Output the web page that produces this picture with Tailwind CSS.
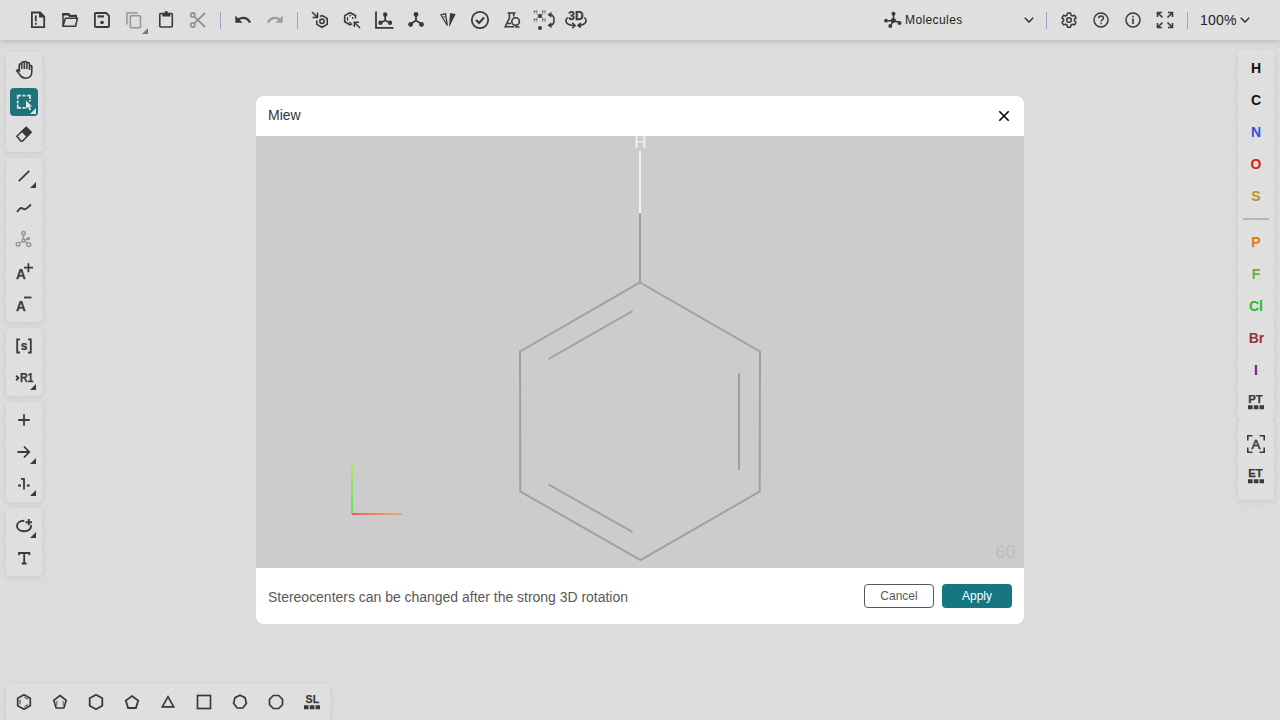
<!DOCTYPE html>
<html lang="en">
<head>
<meta charset="utf-8">
<title>Ketcher</title>
<script src="https://cdn.jsdelivr.net/npm/@tailwindcss/browser@4"></script>
<style>
svg.i{width:24px;height:24px;fill:none;stroke:#3a3a3a;stroke-width:1.8;overflow:visible;flex:none}
svg.i .f{fill:#3a3a3a;stroke:none}
svg.i text{fill:#3a3a3a;stroke:#3a3a3a;stroke-width:.25;font-family:"Liberation Sans",sans-serif;font-weight:700}
svg.i text.n{stroke:none;font-weight:400;font-size:5.5px}
.m::after{content:"";position:absolute;right:6px;bottom:4px;border-left:6px solid transparent;border-bottom:6px solid #3d3d3d}
</style>
</head>
<body class="w-[1280px] h-[720px] overflow-hidden bg-[#dddddd] relative flex flex-col font-['Liberation_Sans',sans-serif]">
<header class="h-10 flex-none flex items-center bg-[#e0e0e0] shadow-[0_2px_5px_rgba(90,100,110,0.25)] pl-[22px] pr-[30px] text-[#222]">
  <div class="flex items-center *:flex *:justify-center">
    <div class="w-8"><svg class="i" viewBox="0 0 24 24"><path d="M5.900 4.500h8.300l4 4.200v10.400H5.900z"/><path class="f" d="M13 4l5.800 5.500H13z"/><path d="M9.800 7.500v5.700M9.800 14.700v2" /></svg></div>
    <div class="w-8"><svg class="i" viewBox="0 0 24 24"><path d="M5 18.200V5.800h5l1.500 2h6.700v2.400M5 18.200l2.400-8h12l-1.800 8z" stroke-width="1.500"/><path d="M4.500 6.300h6l1.300 1.600h7" stroke-width="2.400"/></svg></div>
    <div class="w-8"><svg class="i" viewBox="0 0 24 24"><path d="M5.900 5h10.300l2.800 2.800V18a1 1 0 01-1 1H5.900a1 1 0 01-1-1V6a1 1 0 011-1z"/><path d="M7.500 8.400h6.500" stroke-width="2.200"/><circle class="f" cx="12" cy="14.500" r="1.800"/></svg></div>
    <div class="w-8 relative"><svg class="i opacity-45" viewBox="0 0 24 24"><rect x="8.300" y="7.800" width="10.200" height="12" rx="1" stroke-width="1.500"/><path d="M4.900 16.500V4.900h10.800" stroke-width="1.500"/></svg><i class="absolute right-[2px] -bottom-[2px] border-l-6 border-b-6 border-l-transparent border-b-[#777]"></i></div>
    <div class="w-8"><svg class="i" viewBox="0 0 24 24"><rect x="5.800" y="5.500" width="12.500" height="13.500" rx="1" stroke-width="1.600"/><path class="f" d="M8.300 5h8v3.500h-8z"/><circle class="f" cx="12.200" cy="5" r="1.900"/></svg></div>
    <div class="w-8"><svg class="i opacity-45" viewBox="0 0 24 24"><circle cx="6.800" cy="7.100" r="2.100"/><circle cx="6.800" cy="16.900" r="2.100"/><path d="M8.300 8.600L19 19M8.300 15.400L19 5" stroke-width="2"/></svg></div>
  </div>
  <div class="w-px h-[17px] bg-[#9fa3bd] mx-[6px]"></div>
  <div class="flex">
    <div class="w-8 flex justify-center"><svg class="i" viewBox="0 0 24 24"><path class="f" d="M4.300 7.500v7.300h7.300L8.700 12c3.200-2 7.200-1.300 9.300 3l2.100-.8C17.500 8.600 12 7.300 7 10.200z"/></svg></div>
    <div class="w-8 flex justify-center"><svg class="i opacity-40 -scale-x-100" viewBox="0 0 24 24"><path class="f" d="M4.300 7.500v7.300h7.300L8.700 12c3.200-2 7.200-1.300 9.300 3l2.100-.8C17.500 8.600 12 7.300 7 10.200z"/></svg></div>
  </div>
  <div class="w-px h-[17px] bg-[#9fa3bd] mx-[6px]"></div>
  <div class="flex *:w-8 *:flex *:justify-center">
    <div><svg class="i" viewBox="0 0 24 24"><path d="M4 4l5 5M9.500 4.500v5h-5M14 7.500l5.200 2.900v6L14 19.300l-5.200-2.900v-4M14 7.500l-2 1" stroke-width="1.600"/><circle cx="14" cy="13.300" r="2.200" stroke-width="1.600"/></svg></div>
    <div><svg class="i" viewBox="0 0 24 24"><path d="M15.500 10.500V7.500L10 4.700 4.700 7.600v6.200l5.300 3 2-1" stroke-width="1.600"/><path d="M7.500 9v3.700M9.300 8.300l1.800-1.100M12.700 9v2M9 14l2 1" stroke-width="1.200"/><path d="M20 20l-5.500-5.500M14.300 19v-4.700h4.800" stroke-width="1.600"/></svg></div>
    <div><svg class="i" viewBox="0 0 24 24"><path d="M4 3.500v16.300h17.500M13.200 7v5.500L9 14.500M13.200 12.500l4.300 2"/><g class="f"><circle cx="13.200" cy="6.500" r="2.200"/><circle cx="8.500" cy="14.700" r="2.200"/><circle cx="18" cy="14.700" r="2.200"/></g></svg></div>
    <div><svg class="i" viewBox="0 0 24 24"><path d="M12 7v5.500L6.500 16M12 12.500l5.500 3.500"/><g class="f"><circle cx="12" cy="6.500" r="2.400"/><circle cx="6.600" cy="16.500" r="2.400"/><circle cx="17.500" cy="16.500" r="2.400"/></g></svg></div>
    <div><svg class="i" viewBox="0 0 24 24"><path class="f" d="M14 5l5.700 1.100L13 19.500z"/><path d="M11.300 17.500L5 7l4.500-1.300z" stroke-width="1.300"/><path d="M6.800 9.500l3-1.200" stroke-width=".9"/></svg></div>
    <div><svg class="i" viewBox="0 0 24 24"><circle cx="12" cy="12" r="8.200"/><path d="M8 12l3 3 5-5.500" stroke-width="2.200"/></svg></div>
    <div><svg class="i" viewBox="0 0 24 24"><path d="M7.500 5h8M9.400 5v5L5.200 18.700h9M13.700 5v3.500M6.500 15.500h4.500" stroke-width="1.600"/><circle cx="15.600" cy="13.500" r="3.800" stroke-width="1.600"/><path d="M16 17v1.900h3.500" stroke-width="1.500"/></svg></div>
    <div><svg class="i" viewBox="0 0 24 24"><text class="n" x="1.500" y="5.700">H</text><text class="n" x="9.700" y="5.700">H</text><text class="n" x="1.500" y="13.900">H</text><text class="n" x="9.700" y="13.900">H</text><circle class="f" cx="8" cy="8" r="2"/><circle class="f" cx="8" cy="20" r="2"/><path d="M5 6l6 4M11 6l-6 4" stroke-width=".6"/><path d="M18.500 6.700q3.500.300 3.500 5.300t-3.500 5.300" stroke-width="1.600"/><path class="f" d="M15.500 6.700l4-3v6zM15.500 17.300l4-3v6z"/></svg></div>
    <div><svg class="i" viewBox="0 0 24 24"><text x="4.300" y="12.300" font-size="12" textLength="15.300" lengthAdjust="spacingAndGlyphs">3D</text><path d="M3.800 9.500C-.2 13 2.500 17.300 10 17.500M20.200 9.500c4 3.500 1.500 7.300-5.700 8" stroke-width="1.600"/><path d="M8.300 14.900l2.700 2.600-2.700 2.600M16.800 15l-2.700 2.500 2.700 2" stroke-width="1.600"/></svg></div>
  </div>
  <div class="ml-auto flex items-center w-[152px]">
    <svg class="i" viewBox="0 0 24 24"><path d="M12.500 5.500v7L6 12.700M12.500 12.500l6 2M12.500 12.500L10 17" stroke-width="1.500"/><g class="f"><circle cx="12.500" cy="5.700" r="2"/><circle cx="5" cy="12.700" r="1.900"/><circle cx="12.300" cy="12.500" r="2.500"/><circle cx="18.500" cy="14.900" r="2"/><circle cx="9.300" cy="18" r="2"/></g></svg>
    <span class="text-[12px] leading-none tracking-[.4px]">Molecules</span>
    <svg class="w-[10px] h-[6px] ml-auto -mr-px fill-none stroke-[#333] stroke-[1.500]" viewBox="0 0 10 6"><path d="M.8.800L5 5 9.200.8"/></svg>
  </div>
  <div class="w-px h-[17px] bg-[#9fa3bd] ml-[13px] mr-[6px]"></div>
  <div class="flex *:w-8 *:flex *:justify-center">
    <div><svg class="i" viewBox="0 0 24 24" ><path stroke-width="1.500" stroke-linejoin="round" d="M10.500 5h3l.5 2.200 1.400.8 2.100-.7 1.500 2.600-1.600 1.500v1.400l1.600 1.500-1.500 2.600-2.100-.7-1.400.8-.5 2.200h-3L10 17l-1.400-.8-2.100.7L5 14.300l1.600-1.500v-1.400L5 9.900l1.500-2.600 2.100.7L10 7.200z"/><circle cx="12" cy="12" r="2.300" stroke-width="1.500"/></svg></div>
    <div><svg class="i" viewBox="0 0 24 24" ><circle cx="12" cy="12" r="7" stroke-width="1.500"/><path d="M9.700 10.200c0-3 4.700-3 4.700-.2 0 1.700-2.300 1.800-2.300 3.600M12.100 14.700v1.500" stroke-width="1.500"/></svg></div>
    <div><svg class="i" viewBox="0 0 24 24" ><circle cx="12" cy="12" r="7" stroke-width="1.500"/><path d="M12 7.800v1.500M12 10.300v5.800" stroke-width="1.600"/></svg></div>
    <div><svg class="i" viewBox="0 0 24 24" ><path stroke-width="1.600" d="M4.500 9V4.500H9M15 4.500h4.500V9M4.500 15v4.500H9M15 19.500h4.500V15M4.500 4.500L9.500 9.500M19.500 4.500l-5 5M4.500 19.500l5-5M19.500 19.500l-5-5"/></svg></div>
  </div>
  <div class="w-px h-[17px] bg-[#9fa3bd] ml-[6px] mr-[12px]"></div>
  <span class="text-[14px] leading-none w-[40px] tracking-[.2px]">100%</span>
  <svg class="w-[10px] h-[6px] fill-none stroke-[#333] stroke-[1.500]" viewBox="0 0 10 6"><path d="M.8.800L5 5 9.200.8"/></svg>
</header>

<div class="flex-1 flex justify-between px-[6px] items-start">
  <nav class="mt-3 w-9 flex flex-col gap-[6px] [&>div]:bg-[#e0e0e0] [&>div]:rounded [&>div]:py-[2px] [&>div]:shadow-[0_2px_5px_rgba(90,100,110,0.12)] [&>div>div]:h-8 [&>div>div]:flex [&>div>div]:items-center [&>div>div]:justify-center [&>div>div]:relative">
    <div>
      <div><svg class="i" viewBox="0 0 24 24"><path d="M7.200 13V7a1.200 1.200 0 012.500 0V11 5a1.250 1.250 0 012.600 0V11 4.800a1.250 1.250 0 012.600 0V11 5.800a1.250 1.250 0 012.600 0V12 8.300a1.200 1.200 0 012.300 0V14c0 4-2.600 6.200-6 6.200-3.600 0-5.200-2-6.500-4.200l-2.600-3.400c.8-1.200 2.200-.9 2.900.1z" stroke-width="1.600"/></svg></div>
      <div><span class="size-7 rounded bg-[#1f737b] flex items-center justify-center relative"><svg class="i" viewBox="0 0 24 24"><path d="M5.700 9V5.700H9M10.500 5.700h3M15 5.700h3V9M5.700 10.500v3M5.700 14.500v3.300H9M10.500 17.800h3M18 10v1.500" style="stroke:#e5e5e5;stroke-width:1.700"/><path d="M14 10.500v8.300l2-1.800 1.600 3.500 1.500-.7-1.500-3.400h2.600z" style="fill:#e8e8e8;stroke:none"/></svg><i class="absolute right-[2px] bottom-[2px] border-l-6 border-b-6 border-l-transparent border-b-[#e5e5e5]"></i></span></div>
      <div><svg class="i" viewBox="0 0 24 24"><path stroke-linejoin="round" d="M4.900 14.300l9.300-9 5 5-8.800 9H9z" stroke-width="1.600"/><path class="f" d="M9.300 9.500L14.200 4.500l5.500 5.800-5 5z"/></svg></div>
    </div>
    <div>
      <div class="m"><svg class="i" viewBox="0 0 24 24"><path d="M6.800 17.200L17.300 6.800"/></svg></div>
      <div><svg class="i" viewBox="0 0 24 24"><path d="M5 15.800l3-3.300c1-.9 2-.5 3 .2 1.500 1 2.500.9 4-.5l4-3.700"/></svg></div>
      <div><svg class="i opacity-45" viewBox="0 0 24 24"><g stroke-width="1.400"><circle cx="11.500" cy="5.300" r="1.800"/><circle cx="6" cy="16.200" r="1.800"/><circle cx="16.800" cy="16.600" r="2"/><circle cx="11.500" cy="12.500" r="1.500"/><circle cx="16.500" cy="10.500" r="1"/><path d="M11.500 7v4M10 13.500L7.500 15M13 13.500l2.300 1.800M13 12l2.500-1"/></g></svg></div>
      <div><svg class="i" viewBox="0 0 24 24"><text x="3.900" y="19.300" font-size="14" textLength="9.800" lengthAdjust="spacingAndGlyphs" >A</text><path d="M12 7.700h9M16.400 3.200v9"/></svg></div>
      <div><svg class="i" viewBox="0 0 24 24"><text x="3.900" y="19.300" font-size="14" textLength="9.800" lengthAdjust="spacingAndGlyphs">A</text><path d="M12 5.500h7.500"/></svg></div>
    </div>
    <div>
      <div><svg class="i" viewBox="0 0 24 24"><path d="M8 5.300H5.200v13.200H8M16 5.300h2.800v13.200H16"/><text x="8.700" y="15.700" font-size="12">s</text></svg></div>
      <div class="m"><svg class="i" viewBox="0 0 24 24"><path d="M4.200 9.700L6.300 12l-2.100 2.300" stroke-width="1.900"/><text x="8" y="16.300" font-size="12.500" textLength="13.500" lengthAdjust="spacingAndGlyphs">R1</text></svg></div>
    </div>
    <div>
      <div><svg class="i" viewBox="0 0 24 24"><path d="M6.200 12h11.500M12 6.200v11.500"/></svg></div>
      <div class="m"><svg class="i" viewBox="0 0 24 24"><path d="M5.500 12h11.300M12 6.500l5.200 5.500-5.200 5.500"/></svg></div>
      <div class="m"><svg class="i" viewBox="0 0 24 24"><path d="M6 13.500h3M14.800 13.500h3M9 6.800h3v10.700"/></svg></div>
    </div>
    <div>
      <div class="m"><svg class="i" viewBox="0 0 24 24"><path d="M12.300 6.700c-9.500-.2-9.800 10.300-.3 10.600 5 0 7.500-2.800 7-6.300M13.500 8.200h6.500M16.800 5v6.300" stroke-width="1.900"/></svg></div>
      <div><svg class="i" viewBox="0 0 24 24"><path d="M7 9.300V7h10.400v2.300M12.200 7v10.500M9.800 17.500h4.800"/></svg></div>
    </div>
  </nav>
  <aside class="mt-[10px] w-9 text-[14px] font-bold [&>div]:bg-[#e0e0e0] [&>div]:rounded [&>div]:shadow-[0_2px_5px_rgba(90,100,110,0.12)] [&>div>div]:h-8 [&>div>div]:flex [&>div>div]:items-center [&>div>div]:justify-center">
    <div class="py-[2px]">
      <div class="text-[#111]">H</div><div class="text-[#111]">C</div><div class="text-[#3a50dd]">N</div><div class="text-[#dd1a1a]">O</div><div class="text-[#b9922b]">S</div>
      <p class="h-[14px] flex items-center justify-center"><span class="w-[26px] h-[2px] bg-[#b0b7c0]"></span></p>
      <div class="text-[#e07a12]">P</div><div class="text-[#70a94a]">F</div><div class="text-[#2aba2a]">Cl</div><div class="pl-px text-[#993333]">Br</div><div class="text-[#8a128a]">I</div>
      <div><svg class="i" viewBox="0 0 24 24"><text x="4.300" y="13" font-size="11.500" textLength="14.500" lengthAdjust="spacingAndGlyphs">PT</text><path class="f" d="M4 15.300h4.600v3.900H4zM9.800 15.300h4.600v3.900H9.800zM15.500 15.300H20v3.900h-4.500z"/></svg></div>
    </div>
    <div class="pt-2 pb-2">
      <div><svg class="i" viewBox="0 0 24 24"><path d="M3.800 8.500V3.800h4.700M15.500 3.800h4.700v4.700M3.800 15.500v4.700h4.700M15.500 20.200h4.700v-4.700" stroke-width="1.600"/><text x="7.600" y="17" font-size="13.500" textLength="8.800" lengthAdjust="spacingAndGlyphs" style="font-weight:400;stroke-width:.6">A</text></svg></div>
      <div><svg class="i" viewBox="0 0 24 24"><text x="4.300" y="13" font-size="11.500" textLength="14.500" lengthAdjust="spacingAndGlyphs">ET</text><path class="f" d="M4 15.300h4.600v3.900H4zM9.800 15.300h4.600v3.900H9.800zM15.500 15.300H20v3.900h-4.500z"/></svg></div>
    </div>
  </aside>
</div>

<footer class="flex-none h-9 w-[324px] ml-[6px] rounded-t bg-[#e0e0e0] shadow-[0_2px_5px_rgba(90,100,110,0.12)] flex items-center *:w-9 *:flex *:justify-center">
  <div><svg class="i" viewBox="0 0 24 24"><path d="M12 4.700l6.300 3.600v7.400L12 19.300l-6.300-3.600V8.300z" stroke-width="1.700"/><path d="M8 9.700v4.600M12.300 7.200l3.800 2.200M12.300 16.800l3.800-2.200" stroke-width="1"/></svg></div>
  <div><svg class="i" viewBox="0 0 24 24"><path d="M12 5.500l6.200 4.800L15.900 18H8.100L5.800 10.300z" stroke-width="1.700"/><path d="M8.800 11v4.500M15.200 11v4.500" stroke-width=".8"/></svg></div>
  <div><svg class="i" viewBox="0 0 24 24"><path d="M12 4.700l6.300 3.600v7.400L12 19.300l-6.300-3.600V8.300z"/></svg></div>
  <div><svg class="i" viewBox="0 0 24 24"><path d="M12 6l6.200 4.500L15.900 18H8.100L5.800 10.500z"/></svg></div>
  <div><svg class="i" viewBox="0 0 24 24"><path d="M12 6.700l5.700 10.200H6.300z" stroke-width="1.700"/></svg></div>
  <div><svg class="i" viewBox="0 0 24 24"><rect x="5.500" y="5.500" width="13" height="13" stroke-width="1.700"/></svg></div>
  <div><svg class="i" viewBox="0 0 24 24"><path d="M12 5.300l5 2.400 1.400 5.500-3.500 4.800H9.100l-3.500-4.800L7 7.700z" stroke-width="1.700"/></svg></div>
  <div><svg class="i" viewBox="0 0 24 24"><path d="M9.300 5.500h5.400l3.800 3.800v5.400l-3.800 3.800H9.300l-3.800-3.800V9.300z" stroke-width="1.700"/></svg></div>
  <div><svg class="i" viewBox="0 0 24 24"><text x="5.600" y="12.900" font-size="11.500" textLength="13.500" lengthAdjust="spacingAndGlyphs">SL</text><path class="f" d="M4 15.300h4.600v3.900H4zM9.800 15.300h4.600v3.900H9.800zM15.500 15.300H20v3.900h-4.500z"/></svg></div>
</footer>

<div class="absolute inset-0 flex items-center justify-center bg-[repeating-linear-gradient(135deg,rgba(0,0,0,0.006)_0px,rgba(0,0,0,0.006)_4px,transparent_5px,transparent_8.480px)]">
  <section class="w-[768px] h-[528px] rounded-lg bg-white overflow-hidden flex flex-col">
    <div class="h-10 flex items-center justify-between pl-3 pr-[14px] text-[14px] text-[#333]"><span class="-mt-[2px]">Miew</span>
      <svg class="w-[12px] h-[12px] stroke-black stroke-[1.600]" viewBox="0 0 12 12"><path d="M1.300 1.300l9.400 9.400M10.700 1.300L1.300 10.700"/></svg></div>
    <svg class="w-[768px] h-[432px] bg-[#ccc] flex-none" viewBox="256 136 768 432" fill="none">
      <defs>
        <linearGradient id="gy" gradientUnits="userSpaceOnUse" x1="0" y1="464" x2="0" y2="514"><stop stop-color="#b0e860"/><stop offset="1" stop-color="#60e060"/></linearGradient>
        <linearGradient id="gx" gradientUnits="userSpaceOnUse" x1="352" y1="0" x2="402" y2="0"><stop stop-color="#e86060"/><stop offset="1" stop-color="#e8b060"/></linearGradient>
      </defs>
      <text x="640.300" y="148" text-anchor="middle" font-family="Liberation Sans" font-size="17" fill="#f2f2f2">H</text>
      <path d="M640 151v62" stroke="#f4f4f4" stroke-width="2"/>
      <path d="M640 213v70" stroke="#a0a0a0" stroke-width="2"/>
      <path d="M640 282.500L760 351.500L759.700 491.500L640.500 560L520.300 491.500L520 351.500zM548.500 359L632.500 311M739 373v97M548.500 484.500L632.500 532" stroke="#a0a0a0" stroke-width="2"/>
      <path d="M352 464v50" stroke="url(#gy)" stroke-width="2"/>
      <path d="M352 513h50v2h-50z" fill="url(#gx)"/>
      <text x="995.500" y="557.500" font-family="Liberation Sans" font-size="18" fill="#bdbdbd">60</text>
    </svg>
    <div class="h-14 flex items-center px-3 gap-2 text-[#585858]"><span class="text-[14px] tracking-[-.02px] mr-auto mt-[2px]">Stereocenters can be changed after the strong 3D rotation</span>
      <button class="w-[70px] h-6 rounded border border-[#585858] text-[12px] leading-none">Cancel</button>
      <button class="w-[70px] h-6 rounded bg-[#167782] text-white text-[12px] leading-none">Apply</button></div>
  </section>
</div>
</body>
</html>
